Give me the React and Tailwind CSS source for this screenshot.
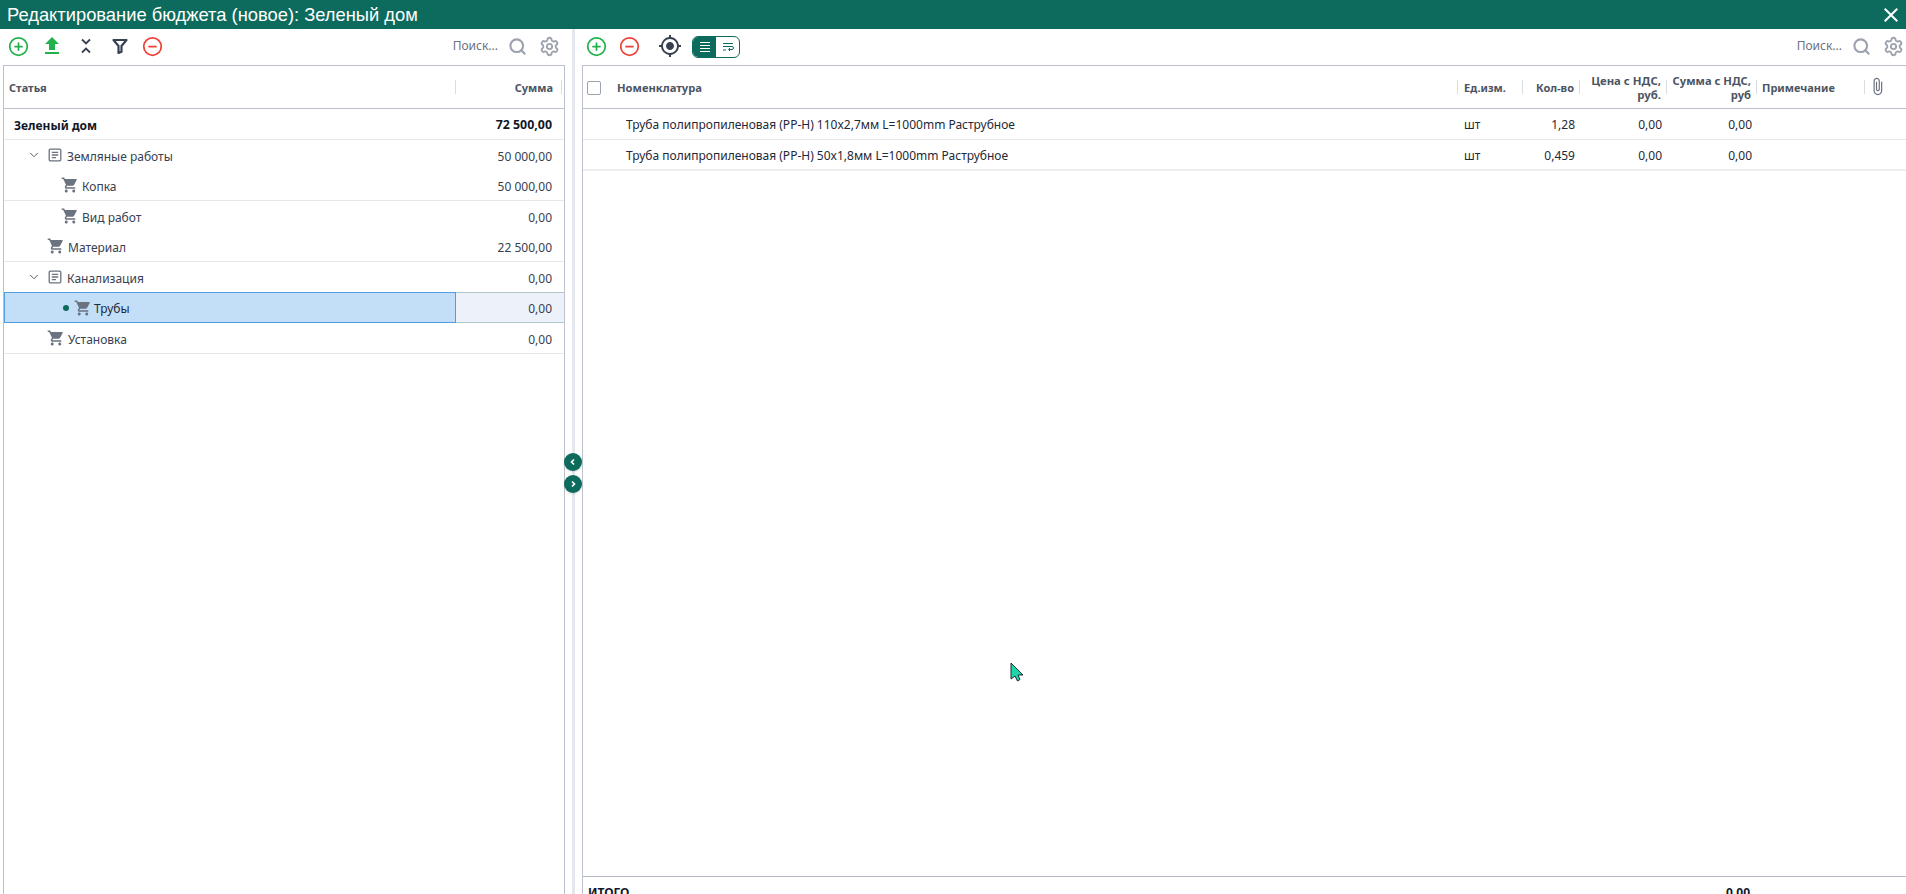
import React from "react";
import { MdShoppingCart, MdFileUpload, MdGpsFixed, MdAttachFile, MdClose } from "react-icons/md";
import { Search, Settings, ChevronDown, CirclePlus, CircleMinus } from "lucide-react";

const F = "font-['Noto_Sans','Open_Sans',sans-serif]";

function Toolbar({ children, className, endClass }) {
  return (
    <div className={"h-9 pb-[2px] flex items-center shrink-0 " + className}>
      {children}
      <div className={"ml-auto flex items-center " + endClass}>
        <span className="text-[12px] text-[#6b7280]">Поиск...</span>
        <Search size={19} strokeWidth={2.7} className="text-[#9ca3af] ml-[10px]" />
        <Settings size={21} strokeWidth={2.1} className="text-[#9ca3af] ml-[12px]" />
      </div>
    </div>
  );
}

function Sep({ className = "" }) {
  return <span className={"absolute top-[14px] w-px h-[14px] bg-[#d6dde3] " + className} />;
}

function DocIcon() {
  return (
    <svg width="14" height="14" viewBox="0 0 14 14" fill="none" stroke="#6b7280" strokeWidth="1.3">
      <rect x="1.2" y="1.2" width="11.6" height="11.6" rx="1.2" />
      <path d="M3.8 4.400h6.400M3.800 7h6.400M3.800 9.600h4.200" />
    </svg>
  );
}

const rows = [
  { h: 31, label: "Зеленый дом", val: "72 500,00", bold: true, b: true, pad: 10 },
  { h: 30, label: "Земляные работы", val: "50 000,00", pad: 21, chev: true, doc: true },
  { h: 31, label: "Копка", val: "50 000,00", pad: 57, cart: true, b: true },
  { h: 30, label: "Вид работ", val: "0,00", pad: 57, cart: true },
  { h: 31, label: "Материал", val: "22 500,00", pad: 43, cart: true, b: true },
  { h: 30, label: "Канализация", val: "0,00", pad: 21, chev: true, doc: true },
  { h: 31, label: "Трубы", val: "0,00", pad: 58, cart: true, sel: true },
  { h: 31, label: "Установка", val: "0,00", pad: 43, cart: true, b: true },
];

function TreeRow({ r }) {
  return (
    <div
      style={{ height: r.h }}
      className={
        "flex items-center text-[12px] " +
        (r.sel ? "bg-[#edf2fa] border-y border-[#b0c9cc] text-[#374151]" : r.b ? "border-b border-[#e5e7eb] text-[#374151]" : "text-[#374151]")
      }
    >
      <div
        style={{ paddingLeft: r.pad }}
        className={
          "flex items-center self-stretch w-[452px] shrink-0 " +
          (r.sel ? "bg-[#c3dff7] border border-[#4f9fe0] -my-px" : "")
        }
      >
        {r.chev && <ChevronDown size={14} strokeWidth={1.6} className="text-[#4b5563] ml-[2px] mr-[7px]" />}
        {r.doc && <span className="mr-[5px] flex"><DocIcon /></span>}
        {r.sel && <span className="w-[6px] h-[6px] rounded-full bg-[#0d6b5e] mr-[5px]" />}
        {r.cart && <MdShoppingCart size={18} className={"text-[#6b7280] " + (r.sel ? "mr-[2px]" : "mr-[3px]")} />}
        <span className={"pt-[3px] " + (r.bold ? "font-bold text-[#111827]" : r.sel ? "text-[#1f2937]" : "")}>{r.label}</span>
      </div>
      <span className={"flex-1 text-right pt-[3px] pr-[12px] " + (r.bold ? "font-bold text-[12.400px] text-[#111827]" : "")}>{r.val}</span>
    </div>
  );
}

function NomRow({ name, qty, h, thick }) {
  return (
    <div
      style={{ height: h }}
      className={"flex items-center pt-[2px] text-[12px] text-[#1f2937] " + (thick ? "border-b-2 border-[#eceef2]" : "border-b border-[#e5e7eb]")}
    >
      <span className="w-[874px] pl-[43px] shrink-0">{name}</span>
      <span className="w-[63px] pl-[7px] shrink-0">шт</span>
      <span className="w-[55px] text-right shrink-0">{qty}</span>
      <span className="w-[87px] text-right shrink-0">0,00</span>
      <span className="w-[90px] text-right shrink-0">0,00</span>
    </div>
  );
}

export default function App() {
  return (
    <div className={"relative h-[894px] w-[1906px] overflow-hidden bg-white flex flex-col " + F}>
      <div className="h-[29px] bg-[#0d6b5e] flex items-center shrink-0 pl-[7px] pr-[3px] text-white font-['Liberation_Sans',sans-serif] text-[18.330px]">
        <span>Редактирование бюджета (новое): Зеленый дом</span>
        <MdClose size={24} className="ml-auto" />
      </div>

      <div className="flex flex-1 min-h-0">
        <div className="w-[565px] shrink-0 pl-[3px] flex flex-col">
          <Toolbar className="pl-[5px]" endClass="mr-[5px]">
            <CirclePlus size={21} strokeWidth={2} className="text-[#22b14c]" />
            <MdFileUpload size={24} className="text-[#22b14c] ml-[11px]" />
            <svg width="14" height="16" viewBox="0 0 14 16" fill="none" stroke="#374151" strokeWidth="1.8" className="ml-[15px]">
              <path d="M3 1.500 7 5.500l4-4M3 14.500l4-4 4 4" />
            </svg>
            <svg width="16" height="16" viewBox="0 0 16 16" fill="none" stroke="#374151" strokeWidth="2.200" className="ml-[19px]">
              <path d="M1.500 2h13L9.500 8v5.800L6.500 15V8z" strokeLinejoin="round" />
            </svg>
            <CircleMinus size={21} strokeWidth={2} className="text-[#ef4136] ml-[14px]" />
          </Toolbar>
          <div className="flex-1 border-l border-r border-t border-[#bcc1cc] flex flex-col min-h-0">
            <div className="relative h-[43px] shrink-0 flex items-center pt-[2px] border-b border-[#bcc1cc] text-[11px] font-bold text-[#4b5563]">
              <span className="pl-[5px]">Статья</span>
              <span className="ml-auto pr-[11px]">Сумма</span>
              <Sep className="left-[451px]" />
              <Sep className="left-[557px]" />
            </div>
            {rows.map((r) => (
              <TreeRow key={r.label} r={r} />
            ))}
          </div>
        </div>

        <div className="relative w-[17px] shrink-0 flex justify-center">
          <div className="w-[3px] bg-[#e5e7ee]" />
          <div className="absolute left-[-1px] top-[424px] flex flex-col gap-[4px]">
            <span className="w-[18px] h-[18px] rounded-full bg-[#0d6b5e] flex items-center justify-center shadow-sm">
              <svg width="8" height="8" viewBox="0 0 8 8" fill="none" stroke="#fff" strokeWidth="1.6"><path d="M5 1.500 2.500 4 5 6.500" /></svg>
            </span>
            <span className="w-[18px] h-[18px] rounded-full bg-[#0d6b5e] flex items-center justify-center shadow-sm">
              <svg width="8" height="8" viewBox="0 0 8 8" fill="none" stroke="#fff" strokeWidth="1.6"><path d="M3 1.500 5.500 4 3 6.500" /></svg>
            </span>
          </div>
        </div>

        <div className="flex-1 min-w-0 flex flex-col">
          <Toolbar className="pl-[4px]" endClass="mr-[2px]">
            <CirclePlus size={21} strokeWidth={2} className="text-[#22b14c]" />
            <CircleMinus size={21} strokeWidth={2} className="text-[#ef4136] ml-[12px]" />
            <MdGpsFixed size={24} className="text-[#374151] ml-[18px]" />
            <div className="ml-[10px] mt-[1px] w-[48px] h-[22px] rounded-[6px] border border-[#0d6b5e] flex overflow-hidden">
              <span className="w-[23px] bg-[#0d6b5e] flex items-center justify-center">
                <svg width="12" height="12" viewBox="0 0 12 12" stroke="#fff" strokeWidth="1.2"><path d="M1 1.500h10M1 4.500h10M1 7.500h10M1 10.500h10" /></svg>
              </span>
              <span className="flex-1 flex items-center justify-center">
                <svg width="12" height="12" viewBox="0 0 12 12" fill="none" stroke="#0d6b5e" strokeWidth="1"><path d="M1 2.500h10M1 5.500h9a1.500 1.500 0 0 1 0 3H7M8 7 6.500 8.500 8 10M1 9h3" /></svg>
              </span>
            </div>
          </Toolbar>
          <div className="flex-1 border-l border-t border-[#bcc1cc] flex flex-col min-h-0">
            <div className="relative h-[43px] shrink-0 flex items-center pt-[1px] border-b border-[#bcc1cc] text-[11px] font-bold text-[#4b5563]">
              <span className="w-[4px] shrink-0" />
              <span className="w-[14px] h-[14px] rounded-[2px] border-[1.500px] border-[#9ca3af] shrink-0" />
              <span className="pl-[16px] pt-[1px] w-[857px] shrink-0 text-[11.200px]">Номенклатура</span>
              <span className="w-[63px] pl-[6px] pt-[1px] shrink-0">Ед.изм.</span>
              <span className="w-[53px] text-right pt-[1px] shrink-0">Кол-во</span>
              <span className="w-[87px] text-right shrink-0 leading-[14px] text-[11.400px]">Цена с НДС,<br />руб.</span>
              <span className="w-[90px] text-right shrink-0 leading-[14px] text-[11.200px]">Сумма с НДС,<br />руб</span>
              <span className="pl-[11px] pt-[1px]">Примечание</span>
              <MdAttachFile size={19} className="absolute left-[1285px] top-[11px] text-[#6b7280]" />
              <Sep className="left-[874px]" />
              <Sep className="left-[939px]" />
              <Sep className="left-[996px]" />
              <Sep className="left-[1083px]" />
              <Sep className="left-[1173px]" />
              <Sep className="left-[1281px]" />
            </div>
            <NomRow name="Труба полипропиленовая (PP-H) 110x2,7мм L=1000mm Раструбное" qty="1,28" h={31} />
            <NomRow name="Труба полипропиленовая (PP-H) 50x1,8мм L=1000mm Раструбное" qty="0,459" h={31} thick />
            <div className="mt-auto h-[18px] overflow-hidden shrink-0 border-t border-[#b4bac6] flex items-start text-[12px] font-bold text-[#111827] leading-[16px] pt-[8px]">
              <span className="pl-[5px] w-[1143px] shrink-0">ИТОГО</span>
              <span>0,00</span>
            </div>
          </div>
        </div>
      </div>

      <svg className="absolute left-[1010px] top-[662px]" width="14" height="20" viewBox="0 0 14 20">
        <path d="M1 1v16l4-3 2.500 5 2.500-1.500-2-4.500h5z" fill="#1fd6a8" stroke="#1f2937" strokeWidth="1" />
      </svg>
    </div>
  );
}
